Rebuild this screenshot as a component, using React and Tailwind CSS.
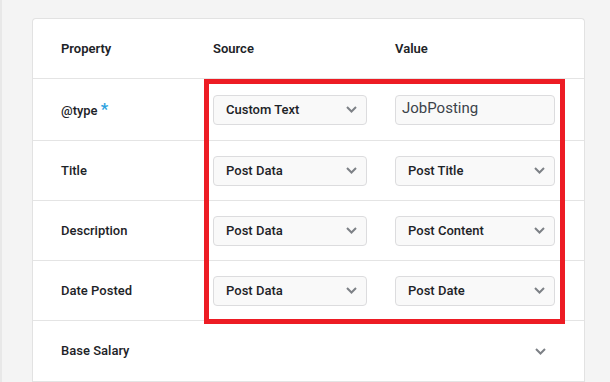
const Chevron = () => (
  <svg width="11" height="7" viewBox="0 0 11 7" className="shrink-0">
    <polyline points="1,1 5.5,5.5 10,1" fill="none" stroke="#7d8186" strokeWidth="2" />
  </svg>
);

const Select = ({ value, width }) => (
  <div className={`flex h-[30px] ${width} items-center justify-between rounded-[4px] border border-[#dcdcde] bg-[#f9f9f9] pl-[12px] pr-[9px]`}>
    <span className="font-['Roboto_Medium','Roboto',sans-serif] text-[13px] text-[#1d2327]">{value}</span>
    <Chevron />
  </div>
);

const rows = [
  { label: 'Title', source: 'Post Data', value: 'Post Title' },
  { label: 'Description', source: 'Post Data', value: 'Post Content' },
  { label: 'Date Posted', source: 'Post Data', value: 'Post Date' }
];

const Row = ({ h, children }) => (
  <div className={`grid ${h} grid-cols-[152px_182px_1fr] items-center border-b border-[#e4e4e4] pl-[28px]`}>
    {children}
  </div>
);

const Label = ({ children }) => (
  <span className="font-['Roboto_Medium','Roboto',sans-serif] text-[13px]">{children}</span>
);

export default function App() {
  return (
    <div className="h-[382px] w-[610px] overflow-hidden border-l-2 border-[#e8e8e8] bg-[#f4f4f4] pt-[18px] pl-[30px] font-['Roboto',sans-serif] text-[#1d2327]">
      <div className="relative w-[553px] rounded-t-[4px] border border-b-0 border-[#e2e2e2] bg-white">
        <div className="grid h-[60px] grid-cols-[152px_182px_1fr] items-center border-b border-[#e4e4e4] pl-[28px] text-[13px] font-semibold">
          <span>Property</span>
          <span>Source</span>
          <span>Value</span>
        </div>

        <Row h="h-[62px]">
          <Label>
            @type <span className="text-[17px] font-bold text-[#2ea2e0]">*</span>
          </Label>
          <Select value="Custom Text" width="w-[154px]" />
          <div className="flex h-[30px] w-[160px] items-start rounded-[4px] border border-[#dcdcde] bg-[#f9f9f9] pl-[6px] pt-[1px]">
            <span className="text-[15px] text-[#3c434a]">JobPosting</span>
          </div>
        </Row>

        {rows.map((r) => (
          <Row key={r.label} h="h-[60px]">
            <Label>{r.label}</Label>
            <Select value={r.source} width="w-[154px]" />
            <Select value={r.value} width="w-[160px]" />
          </Row>
        ))}

        <Row h="h-[61px]">
          <Label>Base Salary</Label>
          <span />
          <div className="flex w-[160px] justify-end pr-[9px]">
            <Chevron />
          </div>
        </Row>

        <div className="pointer-events-none absolute left-[171px] top-[60px] h-[245px] w-[361px] border-[5px] border-[#ed1c24]" />
      </div>
    </div>
  );
}
